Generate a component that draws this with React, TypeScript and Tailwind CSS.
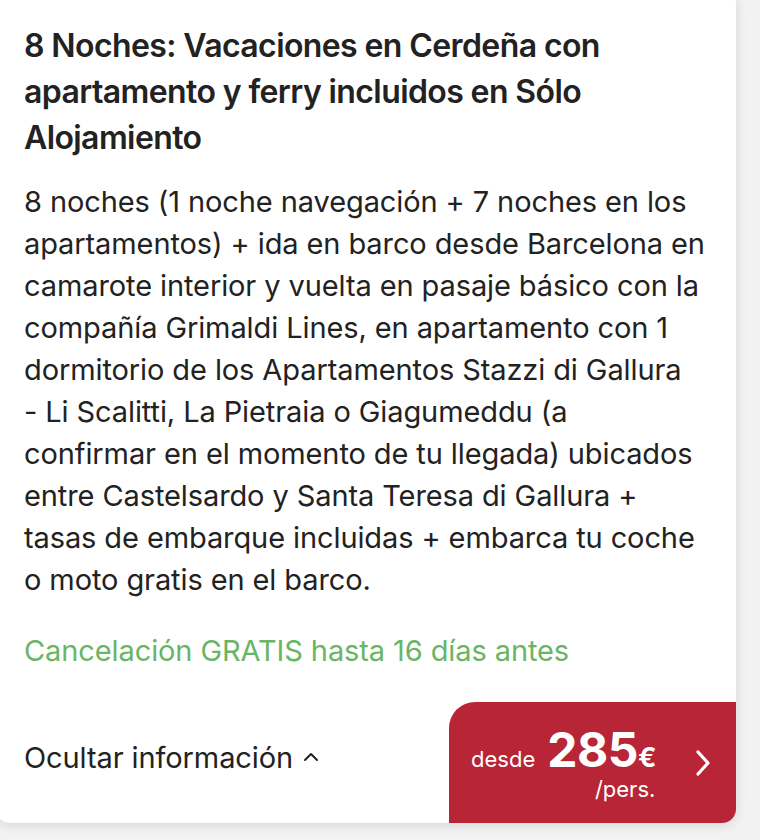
import React from "react";

export default function App() {
  return (
    <div className="w-[760px] h-[840px] overflow-hidden bg-[#f2f2f2]" style={{ fontFamily: "Inter, 'Noto Sans', sans-serif" }}>
      <div className="relative -mt-[10px] -ml-[4px] w-[740px] h-[833px] bg-white rounded-[14px] shadow-[0_2px_12px_rgba(0,0,0,0.12)] flex flex-col overflow-hidden">
        <div className="pl-[28px] pr-[22px] pt-[33px]">
          <h1 className="pr-[14px] text-[32px] leading-[46px] font-semibold text-[#222] tracking-[-0.6px]">
            8 Noches: Vacaciones en Cerdeña con apartamento y ferry incluidos en Sólo Alojamiento
          </h1>
          <p className="mt-[20px] text-[29px] leading-[42px] text-[#222] tracking-[-0.1px]">
            8 noches (1 noche navegación + 7 noches en los apartamentos) + ida en barco desde Barcelona en camarote interior y vuelta en pasaje básico con la compañía Grimaldi Lines, en apartamento con 1 dormitorio de los Apartamentos Stazzi di Gallura<br />- Li Scalitti, La Pietraia o Giagumeddu (a<br />confirmar en el momento de tu llegada) ubicados entre Castelsardo y Santa Teresa di Gallura + tasas de embarque incluidas + embarca tu coche o moto gratis en el barco.
          </p>
          <p className="mt-[29px] text-[29px] leading-[42px] text-[#6ab565] tracking-[-0.1px]">
            Cancelación GRATIS hasta 16 días antes
          </p>
        </div>
        <div className="mt-auto flex items-end justify-between">
          <div className="pl-[28px] pb-[44px] flex items-center gap-[10px] text-[29px] text-[#222] tracking-[-0.1px]">
            <span>Ocultar información</span>
            <svg width="16" height="12" viewBox="0 0 16 12" fill="none" stroke="#222" strokeWidth="2" strokeLinecap="round" strokeLinejoin="round">
              <path d="M2 9 L8 3 L14 9" />
            </svg>
          </div>
          <div className="w-[287px] h-[121px] bg-[#b82536] rounded-tl-[26px] flex items-center pl-[22px] pr-[24px] text-white">
            <div className="flex flex-col items-end mt-[2px]">
              <div className="flex items-baseline h-[48px]">
                <span className="text-[22px] mr-[12px]">desde</span>
                <span className="text-[48px] font-bold leading-[48px] tracking-[-0.5px]">285</span>
                <span className="text-[27px] font-bold">€</span>
              </div>
              <span className="text-[22px] leading-[26px] mr-[1px] mt-[2px]">/pers.</span>
            </div>
            <svg className="ml-auto" width="18" height="28" viewBox="0 0 18 28" fill="none" stroke="white" strokeWidth="3.2" strokeLinecap="round" strokeLinejoin="round">
              <path d="M4 3 L14 14 L4 25" />
            </svg>
          </div>
        </div>
      </div>
    </div>
  );
}
